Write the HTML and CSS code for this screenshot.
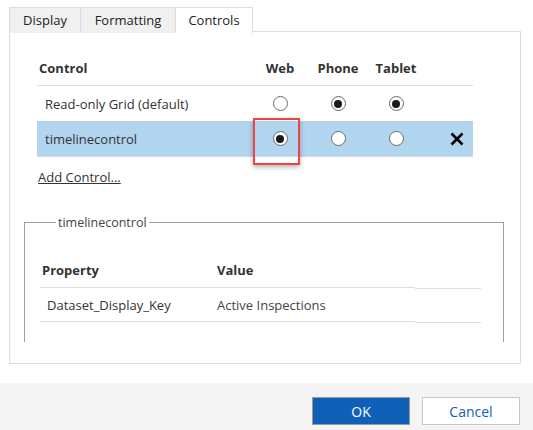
FILE: index.html
```html
<!DOCTYPE html>
<html>
<head>
<meta charset="utf-8">
<link rel="stylesheet" href="styles.css">
</head>
<body>
<div class="dialog">
  <div class="content">
    <div class="tabs">
      <div class="tab">Display</div>
      <div class="tab">Formatting</div>
      <div class="tab active">Controls</div>
    </div>
    <div class="panel">
      <div class="grid">
        <div class="row head">
          <div class="c name">Control</div>
          <div class="c mid">Web</div>
          <div class="c mid">Phone</div>
          <div class="c mid">Tablet</div>
          <div class="c"></div>
        </div>
        <div class="row">
          <div class="c name item">Read-only Grid (default)</div>
          <div class="c mid"><span class="radio"></span></div>
          <div class="c mid"><span class="radio on"></span></div>
          <div class="c mid"><span class="radio on"></span></div>
          <div class="c"></div>
        </div>
        <div class="row sel">
          <div class="c name item">timelinecontrol</div>
          <div class="c mid mark"><span class="radio on"></span><span class="callout"></span></div>
          <div class="c mid"><span class="radio"></span></div>
          <div class="c mid"><span class="radio"></span></div>
          <div class="c del">
            <svg width="14" height="14" viewBox="0 0 14 14"><path d="M1.5 1.5 L12.5 12.5 M12.5 1.5 L1.5 12.5" stroke="#000" stroke-width="2.6" fill="none"/></svg>
          </div>
        </div>
      </div>
      <a class="add">Add Control...</a>
      <div class="clip">
        <fieldset class="props">
          <legend>timelinecontrol</legend>
          <div class="ptable">
            <div class="pc ph">Property</div>
            <div class="pc ph">Value</div>
            <div class="pc pe"></div>
            <div class="pc pv first">Dataset_Display_Key</div>
            <div class="pc pv">Active Inspections</div>
            <div class="pc pe"></div>
          </div>
        </fieldset>
      </div>
    </div>
  </div>
  <div class="footer">
    <button class="btn ok">OK</button>
    <button class="btn cancel">Cancel</button>
  </div>
</div>
</body>
</html>
```
FILE: styles.css
```css
html, body {
  margin: 0;
  padding: 0;
  background: #fff;
}
body {
  font-family: "Open Sans", "Noto Sans", sans-serif;
  font-size: 13px;
  color: #333;
  width: 533px;
  height: 430px;
  overflow: hidden;
}
.dialog {
  display: flex;
  flex-direction: column;
  height: 430px;
}
.content {
  padding: 7px 12px 0 9px;
  height: 376px;
  box-sizing: border-box;
}
.tabs {
  display: flex;
  height: 25px;
  margin-bottom: -1px;
  position: relative;
  z-index: 1;
}
.tab {
  box-sizing: border-box;
  height: 26px;
  line-height: 24px;
  padding: 0 14px;
  background: #f0f0f0;
  border: 1px solid #ddd;
  border-bottom: none;
  border-left: none;
  color: #222;
}
.tab:first-child {
  border-left: 1px solid #ddd;
  width: 72px;
  text-align: center;
  padding: 0;
}
.tab:nth-child(2) {
  width: 95px;
  text-align: center;
  padding: 0;
}
.tab.active {
  background: #fff;
  width: 77px;
  text-align: center;
  padding: 0;
  height: 26px;
}
.panel {
  border: 1px solid #ddd;
  height: 333px;
  box-sizing: border-box;
  padding: 19px 0 0 27px;
}
.grid {
  width: 436px;
}
.row {
  display: grid;
  grid-template-columns: 214px 58px 58px 58px 48px;
  height: 35px;
  align-items: center;
}
.row.head {
  height: 34px;
  border-bottom: 1px solid #ddd;
  font-weight: bold;
  color: #333;
}
.row.sel {
  background: #b1d5ef;
  border-bottom: 1px solid #c8dced;
}
.c {
  height: 100%;
  display: flex;
  align-items: center;
}
.name {
  padding-left: 2px;
}
.item {
  padding-left: 8px;
  color: #333;
}
.mid {
  justify-content: center;
}
.mark {
  position: relative;
}
.callout {
  position: absolute;
  left: 2px;
  top: -3px;
  width: 47px;
  height: 47px;
  box-sizing: border-box;
  border: 2px solid #ee4444;
  box-shadow: 0 2px 5px rgba(0, 0, 0, 0.3);
}
.del {
  padding-left: 25px;
}
.radio {
  width: 15px;
  height: 15px;
  box-sizing: border-box;
  border-radius: 50%;
  border: 1px solid #6a6a6a;
  background: #fff;
  display: flex;
  align-items: center;
  justify-content: center;
}
.radio.on::after {
  content: "";
  width: 8px;
  height: 8px;
  border-radius: 50%;
  background: #1a1a1a;
}
.add {
  display: block;
  margin-top: 11px;
  padding-left: 1px;
  text-decoration: underline;
  color: #333;
  line-height: 18px;
}
.clip {
  margin: 28px 16px 0 -13px;
  height: 128px;
  overflow: hidden;
}
.props {
  margin: 0;
  border: 1px solid #a0a0a0;
  padding: 22px 0 0 15px;
  height: 200px;
}
.props legend {
  padding: 0 2px 0 2px;
  margin-left: 16px;
  font-size: 12.5px;
  color: #444;
}
.ptable {
  display: grid;
  grid-template-columns: 175px 200px 66px;
}
.pc {
  border-bottom: 1px solid #ddd;
  display: flex;
  align-items: center;
}
.ph {
  height: 34px;
  font-weight: bold;
  padding-left: 2px;
}
.pv {
  height: 33px;
  padding-left: 2px;
  color: #444;
}
.pv.first {
  padding-left: 7px;
  color: #333;
}
.pe {
  margin-bottom: -1px;
}
.footer {
  margin-top: 7px;
  flex: 1;
  background: #f4f4f4;
  display: flex;
  justify-content: flex-end;
  align-items: flex-start;
  padding: 14px 13px 0 0;
  gap: 12px;
}
.btn {
  width: 98px;
  height: 28px;
  font-family: "Open Sans", "Noto Sans", sans-serif;
  font-size: 14px;
  box-sizing: border-box;
  padding: 0;
}
.ok {
  background: #1160b7;
  border: 1px solid #9a9a9a;
  color: #fff;
}
.cancel {
  background: #fff;
  border: 1px solid #c8c8c8;
  color: #1160b7;
}
```
